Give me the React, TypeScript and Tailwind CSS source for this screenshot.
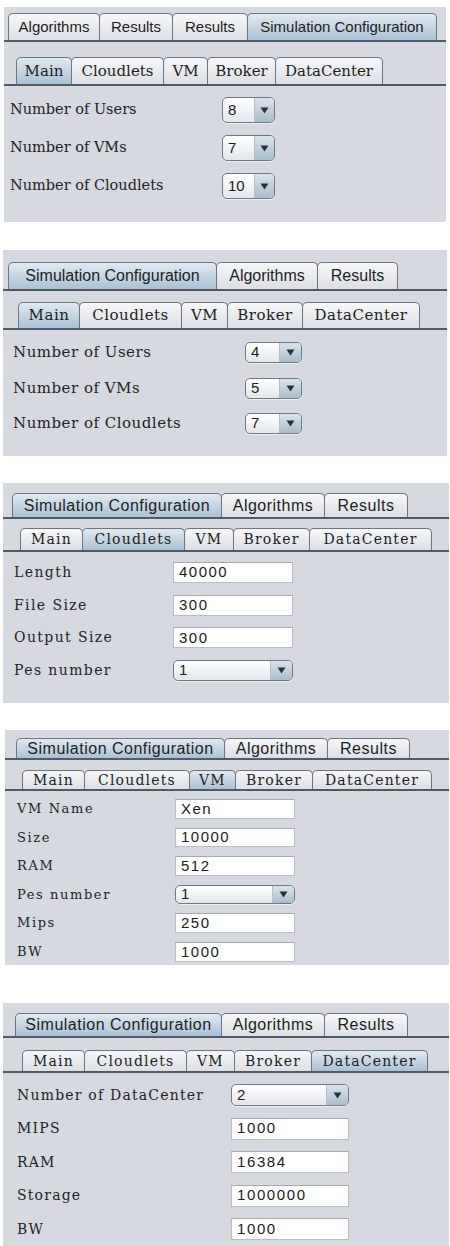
import React from "react";

type Tab = { label: string; w: string; active?: boolean };
type Row = { label: string; value: string; kind: "combo" | "input" };

type Cfg = {
  panel: string;
  topRow: string;
  topTab: string;
  top: Tab[];
  subRow: string;
  subTab: string;
  sub: Tab[];
  rows: Row[];
  rowsBox: string;
  rowH: string;
  label: string;
  ctrlW: string;
  value: string;
  arrowW: string;
};

const SANS = "[font-family:'Liberation_Sans',Arial,sans-serif]";
const SERIF = "[font-family:'DejaVu_Serif','Liberation_Serif',serif]";

function TabItem({ t, cls, first }: { t: Tab; cls: string; first: boolean }) {
  return (
    <div
      className={`${t.w} ${cls} ${first ? "" : "-ml-px"} flex items-center justify-center rounded-t-[5px] border border-b-0 border-[#6d7581] text-[#1d1f22] ${
        t.active
          ? "bg-gradient-to-b from-[#e2eaf1] to-[#a9c1d5] relative z-10"
          : "bg-gradient-to-b from-[#f6f7f9] to-[#dcdfe4]"
      }`}
    >
      <span className="whitespace-nowrap">{t.label}</span>
    </div>
  );
}

function Combo({ value, cfg }: { value: string; cfg: Cfg }) {
  return (
    <div
      className={`${cfg.ctrlW} ${cfg.rowH} flex overflow-hidden rounded-[5px] border border-[#6f7a87] bg-gradient-to-b from-[#ffffff] to-[#e3e6ea] shadow-[0_1px_0_#eef0f3]`}
    >
      <div className={`flex-1 flex items-center pl-[5px] ${SANS} ${cfg.value} text-[#1b1b1b]`}>{value}</div>
      <div
        className={`${cfg.arrowW} flex items-center justify-center border-l border-[#b3bfca] bg-gradient-to-b from-[#dbe4ec] to-[#a9bccb]`}
      >
        <svg width="9" height="7" viewBox="0 0 9 7">
          <path d="M0.5 0.5 L8.5 0.5 L4.5 6.5 Z" fill="#27303b" />
        </svg>
      </div>
    </div>
  );
}

function Input({ value, cfg }: { value: string; cfg: Cfg }) {
  return (
    <div
      className={`${cfg.ctrlW} ${cfg.rowH} flex items-center pl-[5px] border border-[#b9bec6] border-t-[#a3a9b1] bg-white ${SANS} ${cfg.value} text-[#1b1b1b]`}
    >
      {value}
    </div>
  );
}

function Panel({ cfg }: { cfg: Cfg }) {
  return (
    <section className={`bg-[#d6d9df] ${cfg.panel}`}>
      <div className={`flex items-end border-b-2 border-[#515a66] ${cfg.topRow}`}>
        {cfg.top.map((t, i) => (
          <TabItem key={i} t={t} cls={`${cfg.topTab} ${SANS}`} first={i === 0} />
        ))}
      </div>
      <div className={`flex items-end border-b-2 border-[#515a66] ${cfg.subRow}`}>
        {cfg.sub.map((t, i) => (
          <TabItem key={i} t={t} cls={`${cfg.subTab} ${SERIF}`} first={i === 0} />
        ))}
      </div>
      <div className={`flex flex-col ${cfg.rowsBox}`}>
        {cfg.rows.map((r, i) => (
          <div key={i} className={`flex items-center ${cfg.rowH}`}>
            <div className={`${SERIF} ${cfg.label} text-[#222326] whitespace-nowrap`}>{r.label}</div>
            {r.kind === "combo" ? <Combo value={r.value} cfg={cfg} /> : <Input value={r.value} cfg={cfg} />}
          </div>
        ))}
      </div>
    </section>
  );
}

const p1: Cfg = {
  panel: "ml-[4px] w-[442px] mt-[7px] h-[215px] pt-[6px]",
  topRow: "pl-[4px]",
  topTab: "h-[27px] text-[15px]",
  top: [
    { label: "Algorithms", w: "w-[92px]" },
    { label: "Results", w: "w-[74px]" },
    { label: "Results", w: "w-[76px]" },
    { label: "Simulation Configuration", w: "w-[190px]", active: true },
  ],
  subRow: "mt-[15px] pl-[12px]",
  subTab: "h-[27px] text-[15px]",
  sub: [
    { label: "Main", w: "w-[56px]", active: true },
    { label: "Cloudlets", w: "w-[93px]" },
    { label: "VM", w: "w-[45px]" },
    { label: "Broker", w: "w-[69px]" },
    { label: "DataCenter", w: "w-[108px]" },
  ],
  rows: [
    { label: "Number of Users", value: "8", kind: "combo" },
    { label: "Number of VMs", value: "7", kind: "combo" },
    { label: "Number of Cloudlets", value: "10", kind: "combo" },
  ],
  rowsBox: "mt-[11px] gap-[12px]",
  rowH: "h-[26px]",
  label: "pl-[6px] w-[218px] text-[14.5px]",
  ctrlW: "w-[53px]",
  value: "text-[15px]",
  arrowW: "w-[20px]",
};

const p2: Cfg = {
  panel: "ml-[3px] w-[444px] mt-[28px] h-[206px] pt-[12px]",
  topRow: "pl-[5px]",
  topTab: "h-[27px] text-[16px]",
  top: [
    { label: "Simulation Configuration", w: "w-[209px]", active: true },
    { label: "Algorithms", w: "w-[102px]" },
    { label: "Results", w: "w-[81px]" },
  ],
  subRow: "mt-[11px] pl-[15px]",
  subTab: "h-[26px] text-[15px] tracking-[0.5px]",
  sub: [
    { label: "Main", w: "w-[62px]", active: true },
    { label: "Cloudlets", w: "w-[103px]" },
    { label: "VM", w: "w-[47px]" },
    { label: "Broker", w: "w-[76px]" },
    { label: "DataCenter", w: "w-[118px]" },
  ],
  rows: [
    { label: "Number of Users", value: "4", kind: "combo" },
    { label: "Number of VMs", value: "5", kind: "combo" },
    { label: "Number of Cloudlets", value: "7", kind: "combo" },
  ],
  rowsBox: "mt-[12px] gap-[14.5px]",
  rowH: "h-[21px]",
  label: "pl-[10px] w-[242px] text-[15px] tracking-[0.5px]",
  ctrlW: "w-[57px]",
  value: "text-[15px]",
  arrowW: "w-[22px]",
};

const p3: Cfg = {
  panel: "ml-[3px] w-[446px] mt-[27px] h-[220px] pt-[10px]",
  topRow: "pl-[9px]",
  topTab: "h-[24px] text-[16px] tracking-[0.5px]",
  top: [
    { label: "Simulation Configuration", w: "w-[210px]", active: true },
    { label: "Algorithms", w: "w-[104px]" },
    { label: "Results", w: "w-[84px]" },
  ],
  subRow: "mt-[9px] pl-[17px]",
  subTab: "h-[22px] text-[14px] tracking-[1.2px]",
  sub: [
    { label: "Main", w: "w-[63px]" },
    { label: "Cloudlets", w: "w-[103px]", active: true },
    { label: "VM", w: "w-[50px]" },
    { label: "Broker", w: "w-[77px]" },
    { label: "DataCenter", w: "w-[123px]" },
  ],
  rows: [
    { label: "Length", value: "40000", kind: "input" },
    { label: "File Size", value: "300", kind: "input" },
    { label: "Output Size", value: "300", kind: "input" },
    { label: "Pes number", value: "1", kind: "combo" },
  ],
  rowsBox: "mt-[10px] gap-[11.7px]",
  rowH: "h-[21px]",
  label: "pl-[11px] w-[170px] text-[14px] tracking-[1.4px]",
  ctrlW: "w-[120px]",
  value: "text-[15px] tracking-[1.5px]",
  arrowW: "w-[22px]",
};

const p4: Cfg = {
  panel: "ml-[5px] w-[444px] mt-[27px] h-[235px] pt-[8px]",
  topRow: "pl-[11px]",
  topTab: "h-[20px] text-[16px] tracking-[0.5px]",
  top: [
    { label: "Simulation Configuration", w: "w-[209px]", active: true },
    { label: "Algorithms", w: "w-[104px]" },
    { label: "Results", w: "w-[83px]" },
  ],
  subRow: "mt-[10px] pl-[17px]",
  subTab: "h-[19px] text-[14px] tracking-[1.2px]",
  sub: [
    { label: "Main", w: "w-[63px]" },
    { label: "Cloudlets", w: "w-[106px]" },
    { label: "VM", w: "w-[47px]", active: true },
    { label: "Broker", w: "w-[78px]" },
    { label: "DataCenter", w: "w-[120px]" },
  ],
  rows: [
    { label: "VM Name", value: "Xen", kind: "input" },
    { label: "Size", value: "10000", kind: "input" },
    { label: "RAM", value: "512", kind: "input" },
    { label: "Pes number", value: "1", kind: "combo" },
    { label: "Mips", value: "250", kind: "input" },
    { label: "BW", value: "1000", kind: "input" },
  ],
  rowsBox: "mt-[8px] gap-[9px]",
  rowH: "h-[19.6px]",
  label: "pl-[12px] w-[170px] text-[13px] tracking-[1.6px]",
  ctrlW: "w-[120px]",
  value: "text-[15px] tracking-[1.5px]",
  arrowW: "w-[22px]",
};

const p5: Cfg = {
  panel: "ml-[3px] w-[446px] mt-[38px] h-[243px] pt-[10px]",
  topRow: "pl-[12px]",
  topTab: "h-[23px] text-[16px] tracking-[0.5px]",
  top: [
    { label: "Simulation Configuration", w: "w-[207px]", active: true },
    { label: "Algorithms", w: "w-[104px]" },
    { label: "Results", w: "w-[84px]" },
  ],
  subRow: "mt-[12px] pl-[19px]",
  subTab: "h-[21px] text-[14px] tracking-[1.2px]",
  sub: [
    { label: "Main", w: "w-[63px]" },
    { label: "Cloudlets", w: "w-[103px]" },
    { label: "VM", w: "w-[49px]" },
    { label: "Broker", w: "w-[78px]" },
    { label: "DataCenter", w: "w-[117px]", active: true },
  ],
  rows: [
    { label: "Number of DataCenter", value: "2", kind: "combo" },
    { label: "MIPS", value: "1000", kind: "input" },
    { label: "RAM", value: "16384", kind: "input" },
    { label: "Storage", value: "1000000", kind: "input" },
    { label: "BW", value: "1000", kind: "input" },
  ],
  rowsBox: "mt-[11px] gap-[11.5px]",
  rowH: "h-[22px]",
  label: "pl-[14px] w-[228px] text-[14px] tracking-[1.2px]",
  ctrlW: "w-[118px]",
  value: "text-[15px] tracking-[1.6px]",
  arrowW: "w-[22px]",
};

export default function App() {
  return (
    <div className="w-[450px] h-[1246px] bg-white overflow-hidden flex flex-col">
      <Panel cfg={p1} />
      <Panel cfg={p2} />
      <Panel cfg={p3} />
      <Panel cfg={p4} />
      <Panel cfg={p5} />
    </div>
  );
}
